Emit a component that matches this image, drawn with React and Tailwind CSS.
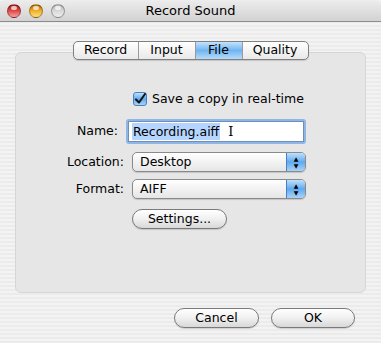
import React from 'react';

const font = { fontFamily: '"DejaVu Sans", "Liberation Sans", sans-serif' };

const Light = ({ className }) => (
  <div className={`w-[14px] h-[14px] rounded-full border border-black/30 relative ${className}`}>
    <div className="absolute left-[3px] top-[1px] w-[6px] h-[4px] rounded-full bg-white/70" />
  </div>
);

const PillButton = ({ children, className = '' }) => (
  <button className={`h-[20px] rounded-full border border-[#7a7a7a] bg-gradient-to-b from-white via-[#f0f0f0] to-[#d8d8d8] text-[12.5px] text-black shadow-[0_1px_1px_rgba(0,0,0,0.15)] ${className}`}>
    {children}
  </button>
);

const Popup = ({ value }) => (
  <div className="w-[174px] h-[20px] flex rounded-[5px] border border-[#8a8a8a] bg-gradient-to-b from-white to-[#e6e6e6] shadow-[0_1px_1px_rgba(0,0,0,0.15)] overflow-hidden">
    <div className="flex-1 pl-[7px] text-[12.5px] leading-[18px]">{value}</div>
    <div className="w-[19px] flex flex-col items-center justify-center gap-[1px] bg-gradient-to-b from-[#bfe0fb] via-[#5ea9ef] to-[#a8d3f7] border-l border-[#4a7fc0]">
      <span className="text-[6px] leading-[6px] text-black">▲</span>
      <span className="text-[6px] leading-[6px] text-black">▼</span>
    </div>
  </div>
);

export default function App() {
  const tabs = ['Record', 'Input', 'File', 'Quality'];
  return (
    <div className="w-[381px] h-[343px] flex flex-col overflow-hidden bg-[repeating-linear-gradient(0deg,#ebebeb_0px,#ebebeb_2px,#f3f3f3_2px,#f3f3f3_4px)]" style={font}>
      {/* title bar */}
      <div className="h-[22px] relative flex items-center border-b border-[#8c8c8c] bg-gradient-to-b from-[#ededed] to-[#d2d2d2] rounded-t-[5px]">
        <div className="flex gap-[8px] pl-[7px]">
          <Light className="bg-gradient-to-b from-[#a51b1b] via-[#e04848] to-[#f6a0a0]" />
          <Light className="bg-gradient-to-b from-[#b66a00] via-[#f3b12a] to-[#fde27c]" />
          <Light className="bg-gradient-to-b from-[#b8b8b8] via-[#d8d8d8] to-[#f0f0f0]" />
        </div>
        <div className="absolute inset-0 flex items-center justify-center text-[13px] text-black">Record Sound</div>
      </div>

      {/* tabs */}
      <div className="flex justify-center mt-[19px] -mb-[8px] relative z-10">
        <div className="flex h-[19px] rounded-[5px] border border-[#808080] bg-gradient-to-b from-white to-[#e9e9e9] overflow-hidden shadow-[0_1px_1px_rgba(0,0,0,0.15)]">
          {tabs.map((t, i) => (
            <div
              key={t}
              className={`flex items-center justify-center text-[12.5px] ${i > 0 ? 'border-l border-[#9a9a9a]' : ''} ${
                t === 'File'
                  ? 'bg-gradient-to-b from-[#c4e2fb] via-[#6fb4f1] to-[#b6dcf9] border-[#3f72b4] w-[47px]'
                  : t === 'Record' ? 'w-[64px]' : t === 'Input' ? 'w-[57px]' : 'w-[66px]'
              }`}
            >
              {t}
            </div>
          ))}
        </div>
      </div>

      {/* panel */}
      <div className="mx-[15px] h-[241px] rounded-[6px] border border-[#d6d6d6] bg-[#e6e6e6] pt-[38px]">
        <div className="flex items-center gap-[5px] pl-[117px] h-[16px]">
          <div className="w-[14px] h-[14px] rounded-[3px] border border-[#4a7fc0] bg-gradient-to-b from-[#bfe0fb] via-[#5ea9ef] to-[#a8d3f7] flex items-center justify-center">
            <svg width="12" height="12" viewBox="0 0 12 12">
              <path d="M2 6.5 L5 9.5 L11 1" fill="none" stroke="#111" strokeWidth="2" strokeLinecap="round" strokeLinejoin="round" />
            </svg>
          </div>
          <span className="text-[12.5px]">Save a copy in real-time</span>
        </div>

        <div className="grid grid-cols-[102px_1fr] items-center gap-x-[8px] mt-[12px]">
          <div className="text-right text-[12.5px]">Name:</div>
          <div className="w-[180px] h-[25px] p-[2px] rounded-[3px] bg-[#8fb7e6]">
            <div className="h-full bg-white border border-[#6f8fb8] flex items-center pl-[3px]">
              <span className="bg-[#b5d5ff] text-[12.5px] leading-[17px] px-[1px]">Recording.aiff</span>
              <span className="ml-[8px] text-[13px] leading-none" style={{ fontFamily: '"DejaVu Serif", serif' }}>I</span>
            </div>
          </div>
        </div>

        <div className="grid grid-cols-[108px_1fr] items-center gap-x-[8px] mt-[8px] gap-y-[7px]">
          <div className="text-right text-[12.5px]">Location:</div>
          <Popup value="Desktop" />
          <div className="text-right text-[12.5px]">Format:</div>
          <Popup value="AIFF" />
          <div />
          <PillButton className="w-[95px] mt-[3px]">Settings...</PillButton>
        </div>
      </div>

      {/* footer buttons */}
      <div className="flex justify-end gap-[12px] pr-[26px] mt-[15px]">
        <PillButton className="w-[85px]">Cancel</PillButton>
        <PillButton className="w-[84px]">OK</PillButton>
      </div>
    </div>
  );
}
